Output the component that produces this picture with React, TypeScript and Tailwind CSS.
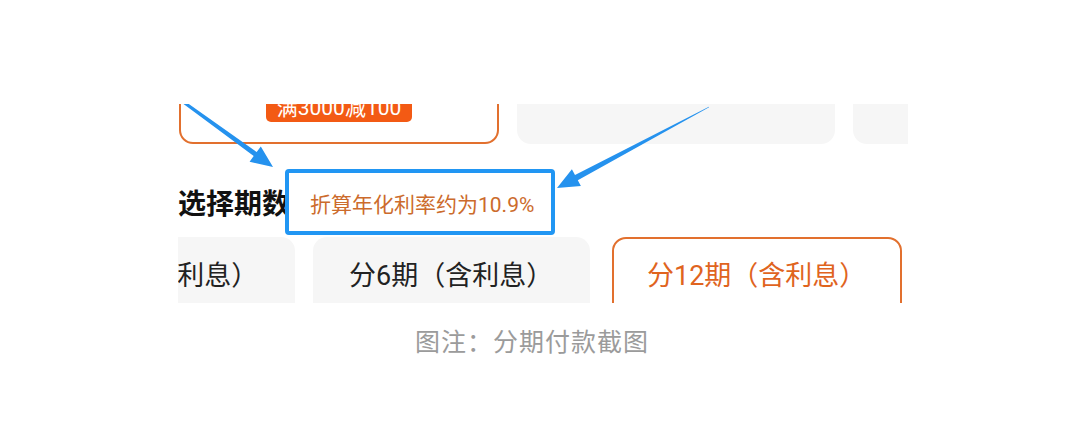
import React from "react";

const FONT = { fontFamily: 'Roboto, "Noto Sans CJK SC", "Noto Sans", sans-serif' };

// tapered arrow: thin tail, wider shaft near a triangular head
function arrowPoints(
  x1: number,
  y1: number,
  x2: number,
  y2: number,
  w0: number,
  w1: number,
  hl: number,
  hw: number
) {
  const len = Math.hypot(x2 - x1, y2 - y1);
  const ux = (x2 - x1) / len;
  const uy = (y2 - y1) / len;
  const nx = -uy;
  const ny = ux;
  const bx = x2 - ux * hl;
  const by = y2 - uy * hl;
  const pts = [
    [x1 + (nx * w0) / 2, y1 + (ny * w0) / 2],
    [bx + (nx * w1) / 2, by + (ny * w1) / 2],
    [bx + nx * hw, by + ny * hw],
    [x2, y2],
    [bx - nx * hw, by - ny * hw],
    [bx - (nx * w1) / 2, by - (ny * w1) / 2],
    [x1 - (nx * w0) / 2, y1 - (ny * w0) / 2],
  ];
  return pts.map((p) => p.map((v) => v.toFixed(1)).join(",")).join(" ");
}

function Arrows() {
  return (
    <svg className="absolute inset-0 pointer-events-none" width="730" height="199" viewBox="0 0 730 199">
      <polygon points={arrowPoints(4, -3, 95, 63, 3, 5, 22, 9.5)} fill="#2592ee" />
      <polygon points={arrowPoints(531, 3, 379, 84, 0.6, 6, 22, 9.5)} fill="#2592ee" />
    </svg>
  );
}

export default function App() {
  return (
    <div className="w-[1080px] h-[424px] bg-white flex flex-col" style={FONT}>
      <div className="relative ml-[178px] mt-[104px] w-[730px] h-[199px] overflow-hidden">
        {/* coupon row */}
        <div className="flex -mt-[60px] ml-[1px]">
          <div className="w-[320px] h-[100px] shrink-0 border-2 border-[#e2702e] rounded-[14px] flex flex-col justify-end items-center pb-[20px]">
            <div className="h-[36px] px-[11px] rounded-b-[5px] bg-[#f35a14] text-white text-[21px] leading-[21px] flex items-end pb-[3px]">
              满3000减100
            </div>
          </div>
          <div className="ml-[18px] w-[318px] h-[100px] shrink-0 rounded-[14px] bg-[#f6f6f6]" />
          <div className="ml-[18px] w-[300px] h-[100px] shrink-0 rounded-[14px] bg-[#f6f6f6]" />
        </div>

        {/* section title */}
        <div className="h-[93px] pt-[47px]">
          <div className="text-[28px] leading-[28px] font-bold text-[#111]">选择期数</div>
        </div>

        {/* installment options */}
        <div className="flex -ml-[160px]">
          <div className="w-[277px] h-[90px] shrink-0 rounded-[14px] bg-[#f6f6f6] pl-[36px] pt-[26px] text-[27px] leading-[27px] text-[#222] whitespace-nowrap">
            分3期（含利息）
          </div>
          <div className="ml-[18px] w-[277px] h-[90px] shrink-0 rounded-[14px] bg-[#f6f6f6] pl-[36px] pt-[26px] text-[27px] leading-[27px] text-[#222] whitespace-nowrap">
            分6期（含利息）
          </div>
          <div className="ml-[22px] w-[290px] h-[90px] shrink-0 rounded-[14px] border-2 border-[#e2702e] pl-[33px] pt-[24px] text-[27px] leading-[27px] text-[#e0641e] whitespace-nowrap">
            分12期（含利息）
          </div>
        </div>

        {/* highlighted rate note */}
        <div className="absolute left-[107px] top-[65px] w-[270px] h-[66px] bg-white border-4 border-[#2196f3] rounded-[4px] flex items-center pl-[21px] pt-[6px]">
          <span className="text-[21px] leading-[21px] text-[#cc6b2c] whitespace-nowrap">折算年化利率约为10.9%</span>
        </div>

        <Arrows />
      </div>

      <div className="mt-[27px] pr-[16px] text-center text-[25px] leading-[26px] tracking-[1px] text-[#9b9b9b]">
        图注：分期付款截图
      </div>
    </div>
  );
}
